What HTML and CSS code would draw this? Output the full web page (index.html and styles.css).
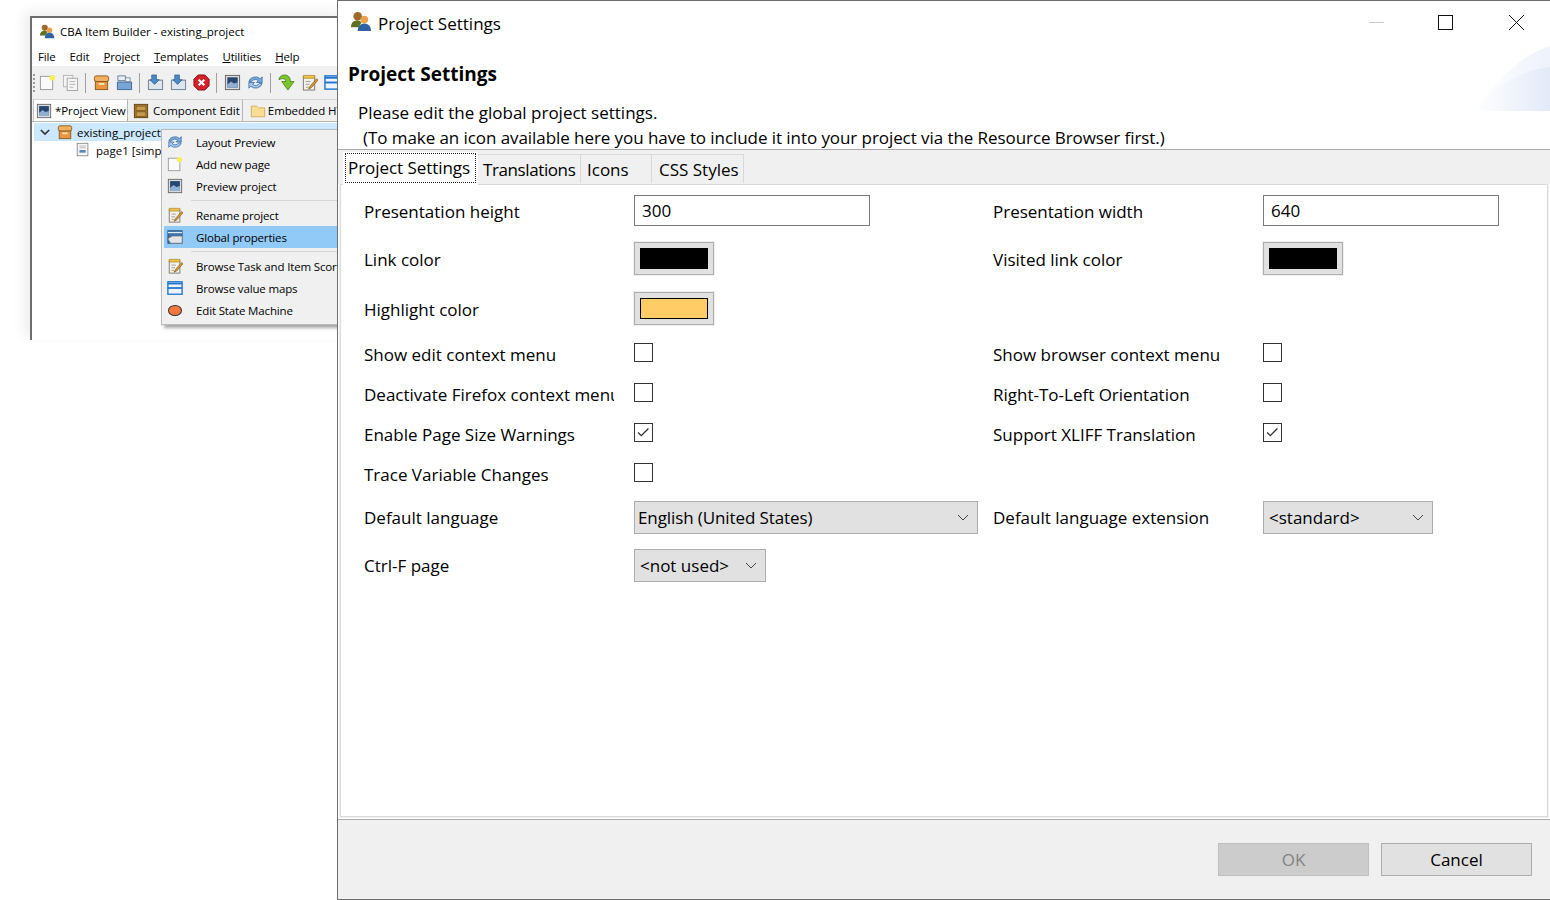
FILE: index.html
```html
<!DOCTYPE html>
<html>
  <head>
    <meta charset="UTF-8" />
    <title>Project Settings</title>
    <link rel="stylesheet" href="styles.css">
  </head>
  <body>
    <svg class="defs" width="0" height="0">
      <defs>
        <symbol id="people" viewBox="0 0 22 22">
          <circle cx="7" cy="5.500" r="4.500" fill="#9a6b2c"/>
          <path d="M0 17c0-5 3-7 7-7 2 0 3 1 4 2l-3 5z" fill="#5f7021"/>
          <circle cx="14" cy="9" r="4" fill="#e9a24b"/>
          <path d="M7 21c0-5 3-8 7-8s7 3 7 8z" fill="#2f62a3"/>
        </symbol>
        <symbol id="newpage" viewBox="0 0 18 18">
          <rect x="1.500" y="2.500" width="13" height="14" fill="#fafafa" stroke="#9a9a9a"/>
          <circle cx="14" cy="4" r="3" fill="#f7ee5a"/>
        </symbol>
        <symbol id="copy" viewBox="0 0 18 18">
          <rect x="1.500" y="1.500" width="10" height="12" fill="#f4f4f4" stroke="#b5b5b5"/>
          <rect x="5.500" y="4.500" width="11" height="13" fill="#f4f4f4" stroke="#a5a5a5"/>
          <path d="M8 8h6M8 11h6M8 14h4" stroke="#b5b5b5"/>
        </symbol>
        <symbol id="box" viewBox="0 0 18 18">
          <rect x="1.500" y="2" width="15" height="6" rx="2" fill="#f0b060" stroke="#8a5a1c"/>
          <rect x="2.500" y="8" width="13" height="8.500" fill="#e8963f" stroke="#8a5a1c"/>
          <rect x="6" y="9.500" width="6" height="2" fill="#fbe4b8"/>
        </symbol>
        <symbol id="open" viewBox="0 0 18 18">
          <path d="M2 2h8v5H2z" fill="#e8eef5" stroke="#5a7fa8"/>
          <path d="M1.500 8.500h15v8h-15z" fill="#7ba4d2" stroke="#3f6796"/>
          <path d="M10 4h5v4h-5z" fill="#f4f4f4" stroke="#7d8ea3"/>
        </symbol>
        <symbol id="import" viewBox="0 0 18 18">
          <rect x="1.500" y="6.500" width="15" height="10" fill="#dfe5ec" stroke="#6f7f92"/>
          <path d="M5 1h5v5h3l-5 5-5-5h2z" fill="#4a8ac8" stroke="#27588c" stroke-width=".7"/>
        </symbol>
        <symbol id="stop" viewBox="0 0 18 18">
          <path d="M5.500 1h7L17 5.500v7L12.500 17h-7L1 12.500v-7z" fill="#d3222a" stroke="#8c1016"/>
          <path d="M6 6l6 6M12 6l-6 6" stroke="#fff" stroke-width="2.200"/>
        </symbol>
        <symbol id="preview" viewBox="0 0 18 18">
          <rect x="1.500" y="1.500" width="15" height="15" fill="#dcdcdc" stroke="#666"/>
          <rect x="3.500" y="3.500" width="11" height="11" fill="#27466f"/>
          <path d="M3.500 11l4-3 3 2 4-1v5.500h-11z" fill="#8fb0d3"/>
        </symbol>
        <symbol id="refresh" viewBox="0 0 18 18">
          <path d="M2 8a7 6 0 0 1 12-3l2-2v6h-6l2-2a4 3 0 0 0-7 1z" fill="#7fa9d8" stroke="#2d65a5" stroke-width=".8"/>
          <path d="M16 10a7 6 0 0 1-12 3l-2 2V9h6l-2 2a4 3 0 0 0 7-1z" fill="#a9c8ea" stroke="#2d65a5" stroke-width=".8"/>
        </symbol>
        <symbol id="arrow" viewBox="0 0 18 18">
          <path d="M1 6c0-3 3-5 6-5s6 2 6 6v1h4l-6.500 9L4 8h4V7c0-1-1-2-2-2-2 0-3 0-5 1z" fill="#7cc52c" stroke="#3f7d12" stroke-width=".8"/>
        </symbol>
        <symbol id="notes" viewBox="0 0 18 18">
          <rect x="2.500" y="3" width="12" height="14" fill="#f4f1e6" stroke="#777"/>
          <path d="M2.500 1.500h12v3h-12z" fill="#f0c24e" stroke="#a07c1c" stroke-width=".7"/>
          <path d="M5 8h5M5 11h4M5 14h3" stroke="#999"/>
          <path d="M16.500 5l-7 8-1.500 3 3-1.500 7-8z" fill="#d99a3a" stroke="#7a5216" stroke-width=".7"/>
        </symbol>
        <symbol id="bars" viewBox="0 0 18 18">
          <rect x="1" y="2" width="16" height="14" fill="#eef4fb" stroke="#1f74d0" stroke-width="1.500"/>
          <path d="M1 9h16" stroke="#1f74d0" stroke-width="2"/>
          <path d="M1 4h16" stroke="#1f74d0" stroke-width="2"/>
        </symbol>
        <symbol id="drawer" viewBox="0 0 18 18">
          <rect x="1.500" y="1.500" width="15" height="15" fill="#a8782e" stroke="#5f4210"/>
          <rect x="3.500" y="3.500" width="11" height="5" fill="#c59a4c" stroke="#5f4210" stroke-width=".6"/>
          <rect x="3.500" y="10" width="11" height="5" fill="#c59a4c" stroke="#5f4210" stroke-width=".6"/>
        </symbol>
        <symbol id="folder" viewBox="0 0 18 18">
          <path d="M1.500 3.500h6l2 2h7v10h-15z" fill="#f9dd94" stroke="#d2a95a"/>
        </symbol>
        <symbol id="pagedoc" viewBox="0 0 18 18">
          <rect x="2.500" y="1.500" width="12" height="14" fill="#f5f5f5" stroke="#8a8a8a"/>
          <path d="M5 4.500h7M5 6.500h7" stroke="#b5b5b5"/>
          <rect x="5" y="9" width="7" height="3" fill="#5d86b4"/>
        </symbol>
        <symbol id="globalprops" viewBox="0 0 18 18">
          <rect x="1" y="2" width="16" height="14" fill="#3e6fa6" stroke="#25507f"/>
          <path d="M1 4h16" stroke="#dfe8f3" stroke-width="1.500"/>
          <path d="M1 11l5-3h11v8H4z" fill="#e4e4e4" stroke="#777" stroke-width=".7"/>
        </symbol>
        <symbol id="tick" viewBox="0 0 19 19">
          <path d="M3.500 9.500l3.500 3.500 8-8" fill="none" stroke="#333" stroke-width="1.500"/>
        </symbol>
        <symbol id="chevron" viewBox="0 0 12 8">
          <path d="M1 1l5 5 5-5" fill="none" stroke="#444" stroke-width="1"/>
        </symbol>
        <symbol id="chevron-bold" viewBox="0 0 12 8">
          <path d="M1 1l5 5 5-5" fill="none" stroke="#333" stroke-width="2"/>
        </symbol>
      </defs>
    </svg>

    <div class="app-window">
      <div class="app-title">
        <svg class="app-logo"><use href="#people"/></svg>
        <span>CBA Item Builder - existing_project</span>
      </div>
      <div class="menu-bar">
        <span>File</span><span>Edit</span><span><u>P</u>roject</span><span><u>T</u>emplates</span><span><u>U</u>tilities</span><span><u>H</u>elp</span>
      </div>
      <div class="tool-bar">
        <i class="grip"></i>
        <svg class="tool"><use href="#newpage"/></svg>
        <svg class="tool"><use href="#copy"/></svg>
        <i class="tool-sep"></i>
        <svg class="tool"><use href="#box"/></svg>
        <svg class="tool"><use href="#open"/></svg>
        <i class="tool-sep"></i>
        <svg class="tool"><use href="#import"/></svg>
        <svg class="tool"><use href="#import"/></svg>
        <svg class="tool"><use href="#stop"/></svg>
        <i class="tool-sep"></i>
        <svg class="tool"><use href="#preview"/></svg>
        <svg class="tool"><use href="#refresh"/></svg>
        <i class="tool-sep"></i>
        <svg class="tool"><use href="#arrow"/></svg>
        <svg class="tool"><use href="#notes"/></svg>
        <svg class="tool"><use href="#bars"/></svg>
      </div>
      <div class="view-tabs">
        <div class="view-tab active"><svg class="icon-16"><use href="#preview"/></svg>*Project View</div>
        <div class="view-tab component"><svg class="icon-16"><use href="#drawer"/></svg>Component Edit</div>
        <div class="view-tab embedded"><svg class="icon-16"><use href="#folder"/></svg>Embedded HTML</div>
      </div>
      <div class="tree">
        <div class="tree-row selected">
          <svg class="tree-toggle"><use href="#chevron-bold"/></svg>
          <svg class="icon-16"><use href="#box"/></svg>
          <span>existing_project</span>
        </div>
        <div class="tree-row child">
          <svg class="icon-16"><use href="#pagedoc"/></svg>
          <span>page1 [simple]</span>
        </div>
      </div>
    </div>

    <div class="context-menu">
      <div class="menu-item"><svg class="icon-16"><use href="#refresh"/></svg>Layout Preview</div>
      <div class="menu-item"><svg class="icon-16"><use href="#newpage"/></svg>Add new page</div>
      <div class="menu-item"><svg class="icon-16"><use href="#preview"/></svg>Preview project</div>
      <div class="menu-sep"></div>
      <div class="menu-item"><svg class="icon-16"><use href="#notes"/></svg>Rename project</div>
      <div class="menu-item highlight"><svg class="icon-16"><use href="#globalprops"/></svg>Global properties</div>
      <div class="menu-sep"></div>
      <div class="menu-item"><svg class="icon-16"><use href="#notes"/></svg>Browse Task and Item Score</div>
      <div class="menu-item"><svg class="icon-16"><use href="#bars"/></svg>Browse value maps</div>
      <div class="menu-item"><i class="state-icon"></i>Edit State Machine</div>
    </div>

    <div class="dialog">
      <div class="banner">
        <svg class="banner-art" viewBox="0 0 75 65" width="75" height="65">
          <defs>
            <linearGradient id="fade" x1="0" x2="1" y1="0" y2="0">
              <stop offset="0" stop-color="#ffffff"/>
              <stop offset="1" stop-color="#e2e9f8"/>
            </linearGradient>
          </defs>
          <path d="M0 65C20 35 45 10 75 0V65z" fill="url(#fade)" opacity=".6"/>
          <path d="M0 65C20 40 45 24 75 21V65z" fill="url(#fade)"/>
        </svg>
        <div class="dialog-title">
          <svg class="dialog-logo"><use href="#people"/></svg>
          <span>Project Settings</span>
          <div class="window-buttons">
            <i class="win-min"></i>
            <i class="win-max"></i>
            <svg class="win-close" viewBox="0 0 15 15"><path d="M0 0l15 15M15 0L0 15" stroke="#111" stroke-width="1"/></svg>
          </div>
        </div>
        <h1>Project Settings</h1>
        <p class="intro">Please edit the global project settings.</p>
        <p class="intro note">(To make an icon available here you have to include it into your project via the Resource Browser first.)</p>
      </div>

      <div class="tabs">
        <div class="tab active"><span>Project Settings</span></div>
        <div class="tab tab-translations">Translations</div>
        <div class="tab tab-icons">Icons</div>
        <div class="tab tab-css">CSS Styles</div>
      </div>

      <div class="panel">
        <div class="form-row row-input">
          <label>Presentation height</label>
          <input class="text-field" type="text" value="300" />
          <label>Presentation width</label>
          <input class="text-field" type="text" value="640" />
        </div>
        <div class="form-row row-color">
          <label>Link color</label>
          <div class="swatch"><i class="swatch-black"></i></div>
          <label>Visited link color</label>
          <div class="swatch"><i class="swatch-black"></i></div>
        </div>
        <div class="form-row row-color last-color">
          <label>Highlight color</label>
          <div class="swatch"><i class="swatch-orange"></i></div>
        </div>
        <div class="form-row row-check">
          <label>Show edit context menu</label>
          <div class="check"></div>
          <label>Show browser context menu</label>
          <div class="check"></div>
        </div>
        <div class="form-row row-check">
          <label class="clipped">Deactivate Firefox context menu</label>
          <div class="check"></div>
          <label>Right-To-Left Orientation</label>
          <div class="check"></div>
        </div>
        <div class="form-row row-check">
          <label>Enable Page Size Warnings</label>
          <div class="check"><svg><use href="#tick"/></svg></div>
          <label>Support XLIFF Translation</label>
          <div class="check"><svg><use href="#tick"/></svg></div>
        </div>
        <div class="form-row row-check">
          <label>Trace Variable Changes</label>
          <div class="check"></div>
        </div>
        <div class="form-row row-select first-select">
          <label>Default language</label>
          <div class="combo combo-wide"><span>English (United States)</span><svg><use href="#chevron"/></svg></div>
          <label>Default language extension</label>
          <div class="combo combo-mid"><span>&lt;standard&gt;</span><svg><use href="#chevron"/></svg></div>
        </div>
        <div class="form-row row-select">
          <label>Ctrl-F page</label>
          <div class="combo combo-small"><span>&lt;not used&gt;</span><svg><use href="#chevron"/></svg></div>
        </div>
      </div>

      <div class="footer">
        <button class="btn" disabled>OK</button>
        <button class="btn">Cancel</button>
      </div>
    </div>
  </body>
</html>
```

FILE: styles.css
```css
* {
  box-sizing: border-box;
}
html, body {
  margin: 0;
  height: 100%;
  overflow: hidden;
  background: #fff;
  font-family: "Open Sans", "Noto Sans", sans-serif;
  color: #000;
}
.defs {
  position: absolute;
}

/* back window */
.app-window {
  position: absolute;
  left: 30px;
  top: 16px;
  width: 320px;
  height: 324px;
  border: 2px solid #6e6e6e;
  border-bottom: none;
  border-right: none;
  background: #fff;
  font-size: 11.5px;
  box-shadow: -6px -4px 12px rgba(0, 0, 0, 0.07);
  overflow: hidden;
}
.app-title {
  display: flex;
  align-items: center;
  height: 26px;
  padding-left: 8px;
  gap: 5px;
}
.app-logo {
  width: 15px;
  height: 15px;
}
.menu-bar {
  display: flex;
  gap: 14px;
  height: 22px;
  padding: 2px 0 0 6px;
  align-items: center;
  letter-spacing: -0.15px;
}
.tool-bar {
  display: flex;
  align-items: center;
  height: 33px;
  background: #f0f0f0;
  padding-left: 1px;
}
.grip {
  width: 2px;
  height: 18px;
  margin-right: 4px;
  border-left: 2px dotted #999;
}
.tool {
  width: 17px;
  height: 17px;
  margin-right: 6px;
}
.tool-sep {
  width: 1px;
  height: 20px;
  background: #a0a0a0;
  margin-right: 7px;
}
.view-tabs {
  display: flex;
  height: 23px;
  background: #f0f0f0;
  padding-left: 1px;
  border-bottom: 1px solid #b5b5b5;
}
.view-tab {
  display: flex;
  align-items: center;
  gap: 3px;
  padding: 0 2px 0 3px;
  border-right: 1px solid #b5b5b5;
  border-top: 1px solid #d5d5d5;
  white-space: nowrap;
  letter-spacing: -0.1px;
}
.view-tab.active {
  width: 95px;
  background: #fff;
  border-left: 1px solid #c5c5c5;
  padding-left: 2px;
}
.view-tab.component {
  width: 116px;
  padding-left: 5px;
  gap: 4px;
  letter-spacing: 0;
}
.view-tab.embedded {
  width: 120px;
  padding-left: 7px;
  gap: 2px;
}
.icon-16 {
  width: 16px;
  height: 16px;
  flex: none;
}
.tree {
  padding: 1px 0 0 2px;
}
.tree-row {
  display: flex;
  align-items: center;
  height: 18px;
  gap: 4px;
  white-space: nowrap;
}
.tree-row.selected {
  background: #cce8ff;
  padding-left: 6px;
}
.tree-row.child {
  padding-left: 41px;
  gap: 5px;
}
.tree-toggle {
  width: 10px;
  height: 7px;
  margin-right: 3px;
}

/* popup menu */
.context-menu {
  position: absolute;
  left: 161px;
  top: 129px;
  width: 190px;
  height: 196px;
  padding: 1px 2px;
  background: #f0f0f0;
  border: 1px solid #bcbcbc;
  box-shadow: 3px 3px 3px rgba(0, 0, 0, 0.35);
  font-size: 11.5px;
  letter-spacing: -0.15px;
}
.menu-item {
  display: flex;
  align-items: center;
  height: 22px;
  padding-left: 3px;
  white-space: nowrap;
}
.menu-item .icon-16 {
  margin-right: 13px;
}
.menu-item.highlight {
  background: #91c9f7;
}
.menu-sep {
  height: 1px;
  background: #d5d5d5;
  margin: 3px 0 3px 27px;
}
.state-icon {
  width: 14px;
  height: 11px;
  margin: 0 14px 0 1px;
  border-radius: 50%;
  background: #f5763c;
  border: 1px solid #333;
}

/* settings dialog */
.dialog {
  position: absolute;
  left: 337px;
  top: 0;
  width: 1213px;
  height: 900px;
  display: flex;
  flex-direction: column;
  background: #fff;
  border: 1px solid #6e6e6e;
  border-right: none;
}
.banner {
  position: relative;
  height: 149px;
  flex: none;
  border-bottom: 1px solid #ababab;
  overflow: hidden;
}
.banner-art {
  position: absolute;
  right: 0;
  top: 45px;
}
.dialog-title {
  display: flex;
  align-items: center;
  height: 45px;
  padding-left: 13px;
  gap: 6px;
  font-size: 17px;
}
.dialog-logo {
  width: 21px;
  height: 21px;
  margin-top: -4px;
}
.window-buttons {
  position: absolute;
  right: 0;
  top: 0;
  width: 181px;
  height: 45px;
}
.win-min {
  position: absolute;
  left: 0;
  top: 21px;
  width: 15px;
  height: 1px;
  background: #c8c8c8;
}
.win-max {
  position: absolute;
  left: 69px;
  top: 14px;
  width: 15px;
  height: 15px;
  border: 1px solid #111;
}
.win-close {
  position: absolute;
  left: 140px;
  top: 14px;
  width: 15px;
  height: 15px;
}
h1 {
  position: relative;
  margin: 15px 0 0 10px;
  font-size: 19px;
  line-height: 26px;
  font-weight: 700;
}
.intro {
  position: relative;
  margin: 13px 0 0 20px;
  font-size: 17px;
  line-height: 25px;
  white-space: nowrap;
}
.intro.note {
  margin: 0 0 0 25px;
  letter-spacing: -0.07px;
}
.tabs {
  display: flex;
  align-items: flex-end;
  height: 34px;
  flex: none;
  background: #f0f0f0;
  padding-left: 5px;
  font-size: 17px;
}
.tab {
  display: flex;
  align-items: center;
  height: 30px;
  padding: 0 5px;
  background: #f0f0f0;
  border: 1px solid #d9d9d9;
  border-left: none;
  border-bottom: none;
  white-space: nowrap;
}
.tab-translations {
  width: 103px;
  letter-spacing: -0.4px;
}
.tab-icons {
  width: 71px;
  padding-left: 6px;
}
.tab-css {
  width: 92px;
  padding-left: 7px;
}
.tab.active {
  width: 135px;
  height: 33px;
  padding: 1px 2px 2px;
  background: #fff;
  border: none;
  position: relative;
  z-index: 1;
  margin-bottom: -1px;
}
.tab.active span {
  display: flex;
  align-items: center;
  width: 100%;
  height: 100%;
  padding: 0 3px 2px 2px;
  border: 1px dotted #222;
  white-space: nowrap;
  letter-spacing: -0.05px;
}
.panel {
  flex: 1;
  margin: 0 2px;
  padding: 10px 0 0 23px;
  border: 1px solid #d9d9d9;
  outline: 1px solid #f0f0f0;
  font-size: 17px;
}
.form-row {
  display: grid;
  grid-template-columns: 270px 359px 270px 1fr;
  align-items: center;
}
.form-row label {
  white-space: nowrap;
}
label.clipped {
  width: 250px;
  overflow: hidden;
}
.row-input, .row-color {
  line-height: 24px;
}
.row-input label, .row-color label {
  padding-top: 2px;
}
.row-input {
  height: 31px;
  margin-bottom: 16px;
}
.row-color {
  height: 33px;
  margin-bottom: 17px;
}
.last-color {
  margin-bottom: 9px;
}
.row-check {
  height: 40px;
}
.first-select {
  margin-top: 7px;
}
.row-select {
  height: 33px;
  margin-bottom: 15px;
}
.text-field {
  width: 236px;
  height: 31px;
  padding: 0 7px;
  border: 1px solid #7a7a7a;
  font: inherit;
}
.swatch {
  width: 80px;
  height: 33px;
  padding: 5px;
  background: #e1e1e1;
  border: 1px solid #adadad;
  box-shadow: 0 0 0 1px #f0f0f0;
}
.swatch i {
  display: block;
  height: 100%;
  width: 100%;
}
.swatch-black {
  background: #000;
}
.swatch-orange {
  background: #ffcc66;
  border: 1px solid #000;
}
.check {
  width: 19px;
  height: 19px;
  margin-top: -4px;
  border: 1px solid #333;
  background: #fff;
}
.check svg {
  display: block;
  width: 17px;
  height: 17px;
}
.combo {
  display: flex;
  align-items: center;
  justify-content: space-between;
  height: 33px;
  padding: 0 8px 0 3px;
  background: #e1e1e1;
  border: 1px solid #adadad;
  white-space: nowrap;
}
.combo svg {
  width: 12px;
  height: 8px;
}
.combo-wide {
  width: 344px;
  letter-spacing: -0.1px;
}
.combo-mid {
  width: 170px;
  padding-left: 5px;
}
.combo-small {
  width: 132px;
  padding-left: 5px;
}
.footer {
  display: flex;
  justify-content: flex-end;
  gap: 12px;
  flex: none;
  height: 80px;
  padding: 23px 18px 0 0;
  margin-top: 2px;
  background: #f0f0f0;
  border-top: 1px solid #ababab;
}
.btn {
  width: 151px;
  height: 33px;
  background: #e1e1e1;
  border: 1px solid #adadad;
  font: inherit;
  font-size: 17px;
  color: #000;
}
.btn:disabled {
  background: #cccccc;
  border-color: #bfbfbf;
  color: #838383;
}
```
